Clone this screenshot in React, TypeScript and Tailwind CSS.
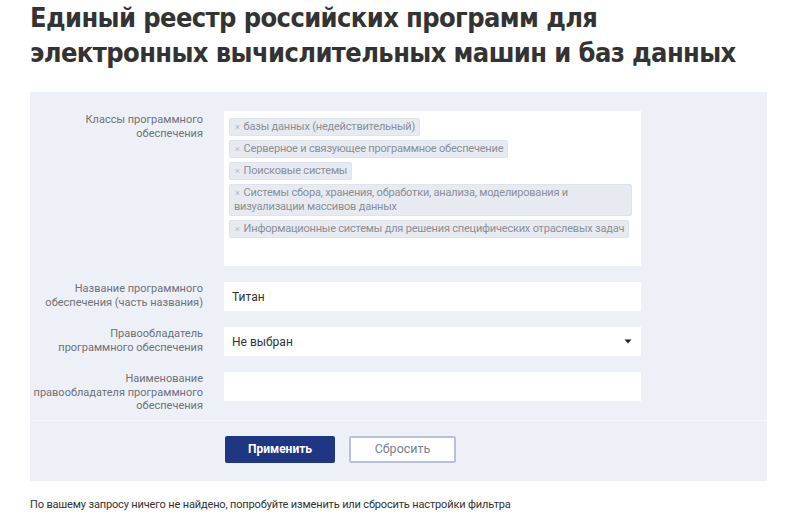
import React from "react";

const tags = [
  "базы данных (недействительный)",
  "Серверное и связующее программное обеспечение",
  "Поисковые системы",
  "Системы сбора, хранения, обработки, анализа, моделирования и визуализации массивов данных",
  "Информационные системы для решения специфических отраслевых задач",
];

function Label({ children, className = "" }: { children: React.ReactNode; className?: string }) {
  return (
    <div className={"w-[173px] shrink-0 text-right text-[11px] leading-[13.5px] text-[#6f7178] " + className}>
      {children}
    </div>
  );
}

export default function App() {
  return (
    <div className="w-[800px] h-[519px] bg-white font-['Roboto',sans-serif] overflow-hidden">
      <div className="pl-[30px]">
        <h1 className="font-['DejaVu_Sans_Condensed','DejaVu_Sans',sans-serif] font-bold text-[27px] leading-[35px] text-[#333333] tracking-[-0.6px]">
          Единый реестр российских программ для
          <br />
          электронных вычислительных машин и баз данных
        </h1>

        <div className="mt-[22px] w-[737px] bg-[#edf0f6]">
          <div className="pt-[19px] pb-[7px] flex flex-col gap-[16px]">
            <div className="flex items-start gap-[21px]">
              <Label className="pt-[2px]">
                Классы программного
                <br />
                обеспечения
              </Label>
              <div className="w-[417px] h-[155px] bg-white pl-[5px] pr-[9px] pt-[7px] flex flex-col items-start gap-[4px]">
                {tags.map((t) => (
                  <div
                    key={t}
                    className="bg-[#e7eaf0] border border-[#dfe3ea] rounded-[2px] px-[4px] py-[1px] text-[11px] leading-[14px] tracking-[-0.2px] text-[#8b8f98]"
                  >
                    <span className="text-[#b4b8c0] text-[9px] mr-[4px] ml-[1px]">×</span>
                    {t}
                  </div>
                ))}
              </div>
            </div>

            <div className="flex items-start gap-[21px]">
              <Label>
                Название программного
                <br />
                обеспечения (часть названия)
              </Label>
              <div className="w-[417px] h-[29px] bg-white flex items-center px-[8px] text-[12px] text-[#333]">
                Титан
              </div>
            </div>

            <div className="flex items-start gap-[21px]">
              <Label>
                Правообладатель
                <br />
                программного обеспечения
              </Label>
              <div className="w-[417px] h-[29px] bg-white flex items-center justify-between px-[8px] text-[12px] text-[#333]">
                <span>Не выбран</span>
                <svg width="8" height="5" viewBox="0 0 8 5" className="mr-[1px]">
                  <path d="M0.5 0.5 L7.5 0.5 L4 4.5 Z" fill="#222" />
                </svg>
              </div>
            </div>

            <div className="flex items-start gap-[21px]">
              <Label>
                Наименование
                <br />
                правообладателя программного
                <br />
                обеспечения
              </Label>
              <div className="w-[417px] h-[29px] bg-white" />
            </div>
          </div>

          <div className="border-t border-[#f4f6fa] pt-[15px] pb-[18px] pl-[195px] flex gap-[14px]">
            <button className="w-[110px] h-[27px] bg-[#1f3783] rounded-[2px] text-white text-[12px] font-bold">
              Применить
            </button>
            <button className="w-[107px] h-[27px] bg-white border-2 border-[#b9c1d8] rounded-[2px] text-[#7b7f88] text-[12.5px]">
              Сбросить
            </button>
          </div>
        </div>

        <p className="mt-[17px] text-[11px] leading-[13px] text-[#333] tracking-[-0.15px]">
          По вашему запросу ничего не найдено, попробуйте изменить или сбросить настройки фильтра
        </p>
      </div>
    </div>
  );
}
